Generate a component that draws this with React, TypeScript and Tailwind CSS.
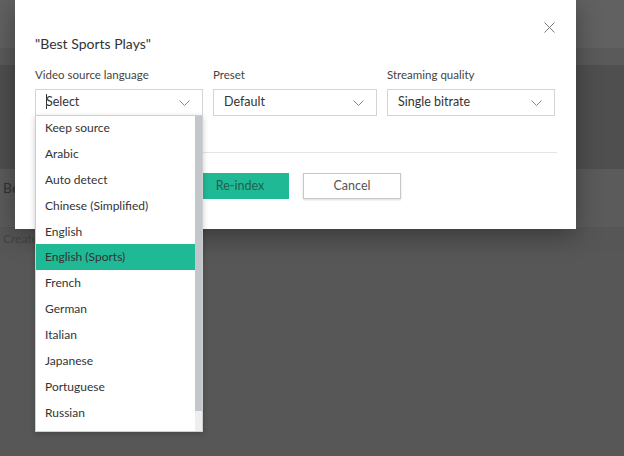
import React from "react";

const Chevron = () => (
  <svg width="11" height="6" viewBox="0 0 11 6" fill="none" className="shrink-0">
    <path d="M0.5 0.5 L5.5 5.5 L10.5 0.5" stroke="#8a8a8a" strokeWidth="1" />
  </svg>
);

const Select = ({ text, w, caret }: { text: string; w: string; caret?: boolean }) => (
  <div className={`${w} h-[27px] border border-[#d4d4d4] flex items-center justify-between pl-[10px] pr-[12px] bg-white`}>
    <span className="text-[12.5px] text-[#333] relative">
      {caret && <span className="absolute left-0 top-[1px] h-[15px] w-px bg-[#333]" />}
      {text}
    </span>
    <Chevron />
  </div>
);

const items = [
  "Keep source",
  "Arabic",
  "Auto detect",
  "Chinese (Simplified)",
  "English",
  "English (Sports)",
  "French",
  "German",
  "Italian",
  "Japanese",
  "Portuguese",
  "Russian",
];

export default function App() {
  return (
    <div
      className="relative w-[624px] h-[456px] overflow-hidden bg-[#575757]"
      style={{ fontFamily: 'Lato, "Open Sans", sans-serif' }}
    >
      {/* background page (dimmed) */}
      <div className="flex flex-col">
        <div className="h-[48px] bg-[#616161]" />
        <div className="h-[17px] bg-[#5a5a5a]" />
        <div className="h-[104px] bg-[#4f4f4f]" />
        <div className="h-[58px] bg-[#5b5b5b] flex items-start pt-[8px] pl-[3px] text-[14px] text-[#333]">Be</div>
        <div className="h-[24px] bg-[#565656] flex items-center pl-[3px] text-[12px] text-[#444]">Created</div>
      </div>

      {/* dialog */}
      <div className="absolute left-[15px] top-0 w-[561px] h-[229px] bg-white shadow-[0_6px_24px_rgba(0,0,0,0.35)] px-[20px]">
        <div className="flex justify-between items-start">
          <div className="pt-[34px] text-[14px] text-[#333] leading-[20px]">"Best Sports Plays"</div>
          <svg width="11" height="11" viewBox="0 0 11 11" className="mt-[22px] mr-[1px]">
            <path d="M0.5 0.5 L10.5 10.5 M10.5 0.5 L0.5 10.5" stroke="#777" strokeWidth="1" />
          </svg>
        </div>
        <div className="flex gap-[10px] mt-[13px]">
          <div className="flex flex-col">
            <div className="text-[11.5px] text-[#444] leading-[16px] mb-[6px]">Video source language</div>
            <Select text="Select" w="w-[168px]" caret />
          </div>
          <div className="flex flex-col">
            <div className="text-[11.5px] text-[#444] leading-[16px] mb-[6px]">Preset</div>
            <Select text="Default" w="w-[164px]" />
          </div>
          <div className="flex flex-col">
            <div className="text-[11.5px] text-[#444] leading-[16px] mb-[6px]">Streaming quality</div>
            <Select text="Single bitrate" w="w-[168px]" />
          </div>
        </div>
        <div className="mt-[36px] h-px bg-[#e4e4e4] mr-[-1px]" />
        <div className="flex gap-[14px] mt-[20px] pl-[156px]">
          <div className="w-[98px] h-[26px] bg-[#20b996] flex items-center justify-center text-[12.5px] text-[#22604f]">Re-index</div>
          <div className="w-[98px] h-[26px] border border-[#c8c8c8] shadow-[0_1px_2px_rgba(0,0,0,0.15)] flex items-center justify-center text-[12.5px] text-[#555]">Cancel</div>
        </div>
      </div>

      {/* dropdown list */}
      <div className="absolute left-[35px] top-[115px] w-[168px] h-[317px] bg-white border border-[#cfcfcf] shadow-[0_2px_6px_rgba(0,0,0,0.2)] flex">
        <div className="flex-1 flex flex-col -mt-[1px]">
          {items.map((it) => (
            <div
              key={it}
              className={`h-[25.9px] flex items-center pl-[9px] text-[12px] text-[#333] ${
                it === "English (Sports)" ? "bg-[#20b996]" : ""
              }`}
            >
              {it}
            </div>
          ))}
        </div>
        <div className="w-[7px] flex flex-col">
          <div className="h-[295px] bg-[#c3c6ca]" />
          <div className="flex-1 bg-[#eeeeee]" />
        </div>
      </div>
    </div>
  );
}
